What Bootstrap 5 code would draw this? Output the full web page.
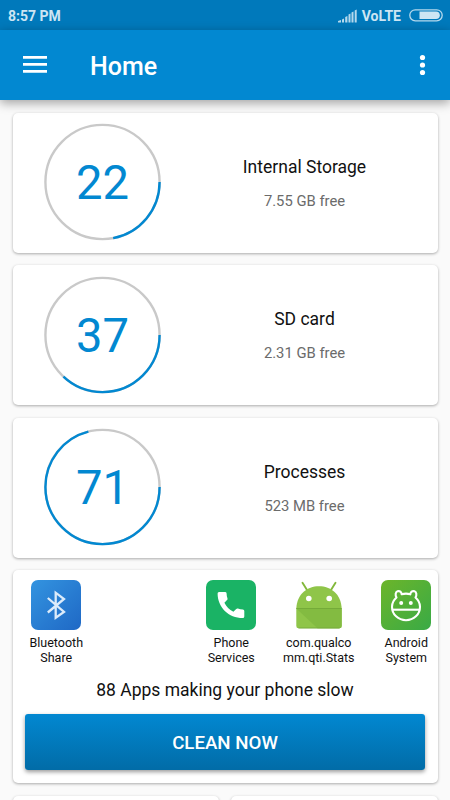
<!DOCTYPE html>
<html lang="en">
<head>
<meta charset="utf-8">
<meta name="viewport" content="width=device-width, initial-scale=1">
<title>Home</title>
<link href="https://cdn.jsdelivr.net/npm/bootstrap@5.3.0/dist/css/bootstrap.min.css" rel="stylesheet">
<style>
body{font-family:Roboto,sans-serif;background:#fafafa;color:#111;height:800px;overflow:hidden;line-height:1.2}
.status-bar{height:30px;background:#0079bb;color:#cde5f3;font-size:14px;font-weight:700;padding:2px 7px 0 8px}
.app-bar{height:70px;background:#0288d1;color:#fff;padding:0 18px 0 23px;box-shadow:0 3px 10px rgba(0,0,0,.36)}
.app-title{font-size:25px;font-weight:500;margin-left:43px;padding-top:4px}
.page{padding:12.5px 12.5px 0;gap:12.5px;height:700px;overflow:hidden}
.tile{border:0;border-radius:5px;background:#fff;box-shadow:0 1px 3px rgba(0,0,0,.32);flex-shrink:0}
.meter{height:140px}
.ring{width:159px;padding-left:20px;padding-bottom:1px;flex-shrink:0}
.ring text{font-size:47.5px;fill:#0288d1}
.meter-text{padding-top:2px}
.meter-name{font-size:17.5px;margin-bottom:15px}
.meter-free{font-size:14.8px;color:#6b6b6b}
.apps{height:213px}
.app-grid{display:grid;grid-template-columns:repeat(5,87.5px);height:107px;padding-top:10px;overflow:hidden}
.app-label{font-size:12.5px;line-height:15px;margin-top:5px}
.summary{font-size:17.5px;padding-top:3px;height:25px}
.btn-clean{height:56px;margin:12px 12.5px 0;padding:9px 0 6px;border:0;border-radius:3px;color:#fff;font-size:18.7px;font-weight:500;background:linear-gradient(#0288d1,#016ca7);box-shadow:0 2px 4px rgba(0,0,0,.4)}
.next-row{gap:12.5px}
.next-tile{height:20px;flex:1 1 0;border-radius:5px 5px 0 0}
</style>
<script src="https://cdn.jsdelivr.net/npm/bootstrap@5.3.0/dist/js/bootstrap.bundle.min.js"></script>
</head>
<body>
<div class="status-bar d-flex align-items-center justify-content-between">
  <span>8:57 PM</span>
  <div class="d-flex align-items-center">
    <svg width="20" height="14" viewBox="0 0 20 14" fill="#b5d9ed"><path d="M0 13.500V12l3-1v2.500zM4 13.500v-3l2-1v4zM7.200 13.500V8l2.200-1v6.500zM10.500 13.500V5.500l2-1v9zM13.500 13.500v-10l2-1v11zM16.700 13.500V1.500l2-1v13z"/></svg>
    <span class="ms-1 me-2">VoLTE</span>
    <svg width="34" height="13" viewBox="0 0 34 13"><rect x=".8" y=".8" width="32.400" height="11" rx="5.500" fill="none" stroke="#b5d9ed" stroke-width="1.300"/><path d="M10.500 2.500H27a3.800 3.800 0 010 7.600H10.500z" fill="#cde5f3"/></svg>
  </div>
</div>
<nav class="app-bar d-flex align-items-center position-relative">
  <svg width="24" height="18" viewBox="0 0 24 18" fill="#fff"><path d="M0 0h24v2.700H0zM0 7h24v2.700H0zM0 14h24v2.700H0z"/></svg>
  <span class="app-title">Home</span>
  <svg class="ms-auto me-1" width="10" height="22" viewBox="0 0 10 22" fill="#fff"><circle cx="4.500" cy="3.500" r="2.600"/><circle cx="4.500" cy="11" r="2.600"/><circle cx="4.500" cy="18.500" r="2.600"/></svg>
</nav>
<main class="page d-flex flex-column">
  <section class="tile meter d-flex align-items-center">
    <div class="ring d-flex justify-content-center"><svg width="140" height="118" viewBox="0 0 140 118"><circle cx="70" cy="59" r="57.500" fill="none" stroke="#c9c9c9" stroke-width="2.400"/><circle cx="70" cy="59" r="57.500" fill="none" stroke="#0288d1" stroke-width="2.400" pathLength="100" stroke-dasharray="22 100"/><text x="70" y="76" text-anchor="middle">22</text></svg></div>
    <div class="meter-text flex-grow-1 text-center"><div class="meter-name">Internal Storage</div><div class="meter-free">7.55 GB free</div></div>
  </section>
  <section class="tile meter d-flex align-items-center">
    <div class="ring d-flex justify-content-center"><svg width="140" height="118" viewBox="0 0 140 118"><circle cx="70" cy="59" r="57.500" fill="none" stroke="#c9c9c9" stroke-width="2.400"/><circle cx="70" cy="59" r="57.500" fill="none" stroke="#0288d1" stroke-width="2.400" pathLength="100" stroke-dasharray="37 100"/><text x="70" y="76" text-anchor="middle">37</text></svg></div>
    <div class="meter-text flex-grow-1 text-center"><div class="meter-name">SD card</div><div class="meter-free">2.31 GB free</div></div>
  </section>
  <section class="tile meter d-flex align-items-center">
    <div class="ring d-flex justify-content-center"><svg width="140" height="118" viewBox="0 0 140 118"><circle cx="70" cy="59" r="57.500" fill="none" stroke="#c9c9c9" stroke-width="2.400"/><circle cx="70" cy="59" r="57.500" fill="none" stroke="#0288d1" stroke-width="2.400" pathLength="100" stroke-dasharray="71 100"/><text x="70" y="76" text-anchor="middle">71</text></svg></div>
    <div class="meter-text flex-grow-1 text-center"><div class="meter-name">Processes</div><div class="meter-free">523 MB free</div></div>
  </section>
  <section class="tile apps d-flex flex-column">
    <div class="app-grid text-center">
      <div><svg class="d-block mx-auto" width="50" height="50" viewBox="0 0 50 50"><defs><linearGradient id="bt" x1="0" y1="0" x2="1" y2="1"><stop stop-color="#3394e0"/><stop offset="1" stop-color="#1f68c5"/></linearGradient></defs><rect width="50" height="50" rx="7" fill="url(#bt)"/><path d="M16.800 18L33 32l-8.300 5.800V12.700L33 19 16.800 32.500" fill="none" stroke="#dcebfa" stroke-width="2.300"/></svg><div class="app-label">Bluetooth<br>Share</div></div>
      <div></div>
      <div><svg class="d-block mx-auto" width="50" height="50" viewBox="0 0 50 50"><rect width="50" height="50" rx="7" fill="#1ab365"/><path d="M13 12h6q1.500 0 1.600 1.400 0 2.600 .9 5 .3 1-.5 1.700l-2.600 2.700c2 4 4.800 7 9 9l2.800-2.800q.7-.7 1.700-.4 2.400.8 5 .9 1.400.1 1.400 1.500v5.500q0 1.600-1.500 1.600C22.600 38.100 11.600 27.100 11.600 13.500q0-1.500 1.400-1.500z" fill="#fff"/></svg><div class="app-label">Phone<br>Services</div></div>
      <div><svg class="d-block mx-auto" width="50" height="50" viewBox="0 0 50 50"><path d="M8.500 2.800l5 8M41.500 2.800l-5 8" stroke="#83b83b" stroke-width="1.900" stroke-linecap="round"/><path d="M2.300 28.500C3 14 13 6.200 25 6.200S47 14 47.700 28.500V46q0 2.200-2.200 2.200h-41q-2.200 0-2.200-2.200z" fill="#8fc549"/><path d="M2.300 28.500h45.400V46q0 2.200-2.200 2.200H23.500z" fill="#83bb41"/><path d="M2.300 28.500h45.400" stroke="#70a636" stroke-width=".8"/><path d="M4.500 48h41" stroke="#72a63a" stroke-width=".8"/><circle cx="14.800" cy="18.500" r="2.800" fill="#fff"/><circle cx="35.200" cy="18.500" r="2.800" fill="#fff"/></svg><div class="app-label">com.qualco<br>mm.qti.Stats</div></div>
      <div><svg class="d-block mx-auto" width="50" height="50" viewBox="0 0 50 50"><defs><linearGradient id="sys" x1="0" y1="0" x2="1" y2="1"><stop stop-color="#6cb52a"/><stop offset="1" stop-color="#39aa46"/></linearGradient></defs><rect width="50" height="50" rx="7" fill="url(#sys)"/><g fill="none" stroke="#fff" stroke-width="2.100" stroke-linejoin="round"><path d="M15.500 17.500c-1.500-2.500-1-5.500 1-6.200 2.300-.8 4 .8 4.200 3q4.300-1.400 8.600 0c.2-2.200 1.900-3.800 4.200-3 2 .7 2.500 3.700 1 6.200 3 2.700 4.500 5.700 4.500 9.200 0 7.700-6.200 13.500-14 13.500s-14-5.800-14-13.500c0-3.500 1.500-6.500 4.500-9.200z"/><path d="M11.500 29.700h27"/></g><circle cx="20.200" cy="23" r="2" fill="#fff"/><circle cx="29.800" cy="23" r="2" fill="#fff"/></svg><div class="app-label">Android<br>System</div></div>
    </div>
    <div class="summary text-center">88 Apps making your phone slow</div>
    <button class="btn btn-clean" type="button">CLEAN NOW</button>
  </section>
  <div class="next-row d-flex"><div class="tile next-tile"></div><div class="tile next-tile"></div></div>
</main>
</body>
</html>
